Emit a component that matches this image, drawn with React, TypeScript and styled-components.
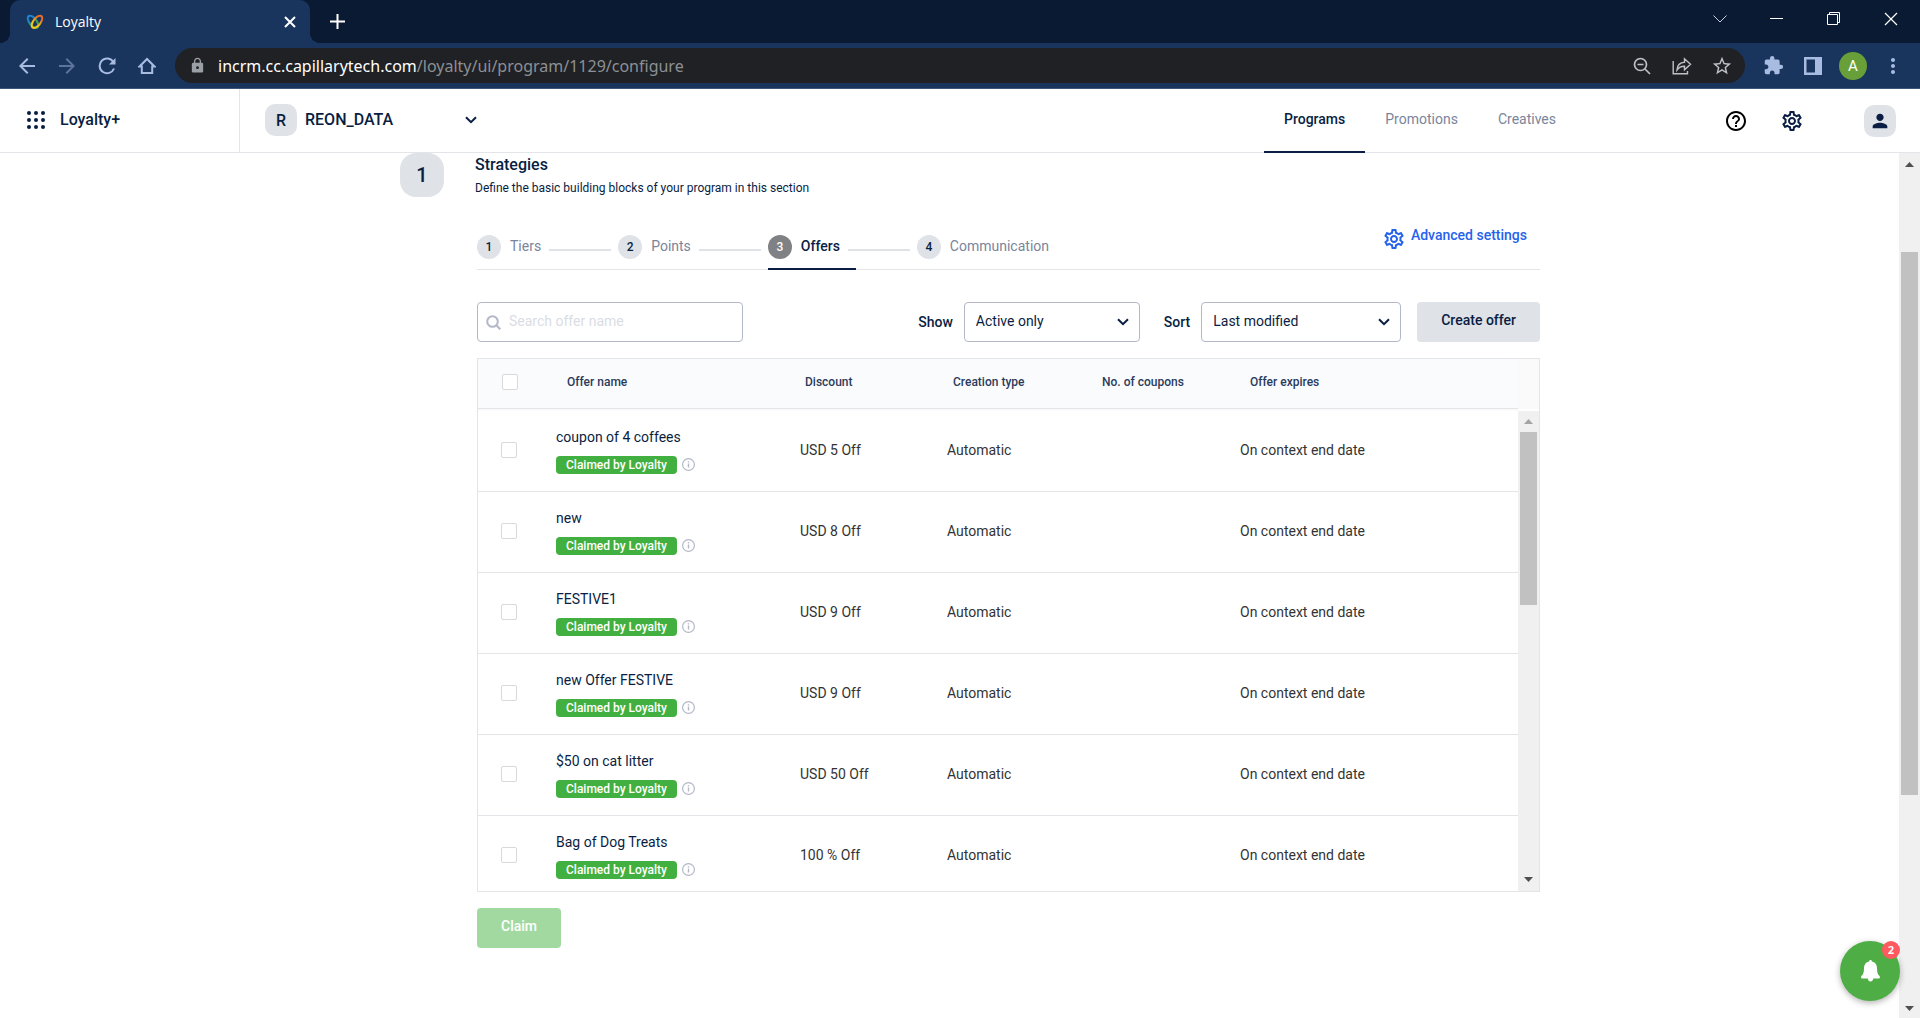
import React from "react";
import styled, { createGlobalStyle } from "styled-components";
import {
  MdArrowBack,
  MdArrowForward,
  MdExtension,
  MdHelpOutline,
  MdLock,
  MdMoreVert,
  MdOutlineSettings,
  MdPerson,
  MdStarBorder,
} from "react-icons/md";

const navy = "#091e42";
const grey = "#dfe2e7";
const line = "#e4e5e8";
const muted = "#7a859b";

const GlobalStyle = createGlobalStyle`
  *, *::before, *::after { box-sizing: border-box; }
  body { margin: 0; overflow: hidden; background: #fff; }
  body, button, input, select { font-family: Roboto, "Liberation Sans", sans-serif; }
  button { border: 0; padding: 0; background: none; color: inherit; }
  h1, p { margin: 0; }
  svg { display: block; flex: none; }
`;

const Page = styled.div`
  display: flex;
  flex-direction: column;
  height: 100vh;
  color: ${navy};
  font-size: 14px;
  line-height: 20px;
`;

/* ---------- browser frame ---------- */

const TabStrip = styled.div`
  display: flex;
  flex: none;
  height: 43px;
  padding: 0 1px 0 10px;
  background: #0a1a33;
  color: #fff;
`;

const BrowserTab = styled.div`
  position: relative;
  display: flex;
  align-items: center;
  width: 300px;
  padding: 0 12px 0 16px;
  border-radius: 10px 10px 0 0;
  background: #1a355d;
  font: 14px/20px "Open Sans", sans-serif;

  &::before,
  &::after {
    content: "";
    position: absolute;
    bottom: 0;
    width: 10px;
    height: 10px;
  }
  &::before {
    right: 100%;
    background: radial-gradient(circle at 0 0, #0a1a33 10px, #1a355d 10px);
  }
  &::after {
    left: 100%;
    background: radial-gradient(circle at 100% 0, #0a1a33 10px, #1a355d 10px);
  }
`;

const TabTitle = styled.span`
  flex: 1;
  margin-left: 11px;
`;

const IconButton = styled.button<{ $w?: number; $color?: string; $end?: boolean }>`
  display: flex;
  flex: none;
  align-items: center;
  justify-content: ${(p) => (p.$end ? "flex-end" : "center")};
  width: ${(p) => p.$w ?? 40}px;
  color: ${(p) => p.$color ?? "#a8bce2"};
`;

const WindowControls = styled.div`
  display: flex;
  height: 37px;
  margin-left: auto;
`;

const Toolbar = styled.div`
  display: flex;
  flex: none;
  height: 46px;
  padding: 5px 7px;
  border-bottom: 1px solid #3d5578;
  background: #1a355d;
`;

const AddressBar = styled.div`
  display: flex;
  flex: 1;
  align-items: center;
  margin: 0 8px;
  padding: 0 3px 0 14px;
  border-radius: 18px;
  background: #202124;
  color: #9aa0a6;
`;

const Url = styled.span`
  flex: 1;
  margin-left: 12px;
  color: #8d9094;
  font: 16px/24px "Noto Sans", sans-serif;

  b {
    color: #fff;
    font-weight: 400;
  }
`;

const Avatar = styled.span`
  display: flex;
  align-items: center;
  justify-content: center;
  width: 28px;
  height: 28px;
  border-radius: 50%;
  background: #689f38;
  color: #fff;
  font-size: 15px;
`;

/* ---------- application header ---------- */

const Header = styled.header`
  display: flex;
  flex: none;
  height: 64px;
  border-bottom: 1px solid ${line};
  font-weight: 500;
`;

const Brand = styled.div`
  display: flex;
  align-items: center;
  gap: 15px;
  width: 240px;
  padding: 0 0 1px 27px;
  border-right: 1px solid ${line};
  font-size: 16px;
`;

const OrgButton = styled.button`
  display: flex;
  align-items: center;
  width: 212px;
  margin-left: 25px;
  padding-bottom: 1px;
  font-size: 16px;
  font-weight: 500;
`;

const SoftBox = styled.span<{ $size: number }>`
  display: flex;
  flex: none;
  align-items: center;
  justify-content: center;
  width: ${(p) => p.$size}px;
  height: ${(p) => p.$size}px;
  border-radius: ${(p) => (p.$size > 40 ? 16 : 10)}px;
  background: ${grey};
  font-size: ${(p) => (p.$size > 40 ? 20 : 16)}px;
  font-weight: 500;
`;

const OrgName = styled.span`
  flex: 1;
  margin-left: 8px;
  padding-bottom: 2px;
  text-align: left;
`;

const Nav = styled.nav`
  display: flex;
  margin-left: auto;
`;

const NavLink = styled.a<{ $active?: boolean }>`
  height: 64px;
  padding: 20px 20px 0;
  border-bottom: ${(p) => (p.$active ? `2px solid ${navy}` : "0")};
  color: ${(p) => (p.$active ? navy : muted)};
  font-weight: ${(p) => (p.$active ? 500 : 400)};
  text-decoration: none;
`;

const HeaderTools = styled.div`
  display: flex;
  align-items: center;
  margin: 0 24px 0 132px;
`;

/* ---------- scrolling area ---------- */

const Body = styled.div`
  display: flex;
  flex: 1;
  min-height: 0;
`;

const Track = styled.div`
  display: flex;
  flex: 1;
  flex-direction: column;
  align-items: center;
  width: 21px;
  padding: 0 2px;
  background: #f0f0f0;
`;

const PageTrack = styled(Track)`
  flex: none;
`;

const TrackEnd = styled.div<{ $h: number; $bottom?: boolean }>`
  display: flex;
  flex: none;
  align-items: center;
  height: ${(p) => p.$h}px;
  margin-top: ${(p) => (p.$bottom ? "auto" : "0")};
`;

const Thumb = styled.div<{ $share: number }>`
  width: 100%;
  height: ${(p) => p.$share}%;
  background: #c1c1c1;
`;

const Main = styled.main`
  display: grid;
  flex: 1;
  grid-template-columns: 400fr minmax(0, 1140px) 359fr;
  overflow: hidden;
`;

const Section = styled.section`
  grid-column: 2;
`;

const SectionHead = styled.div`
  display: flex;
  gap: 31px;
`;

const Title = styled.h1`
  margin-top: 1px;
  font-size: 16px;
  font-weight: 500;
  line-height: 22px;
`;

const Subtitle = styled.p`
  margin-top: 2px;
  font-size: 12px;
`;

const Content = styled.div`
  margin-left: 77px;
`;

const StepBar = styled.div`
  display: flex;
  justify-content: space-between;
  margin-top: 29px;
  padding-right: 13px;
  border-bottom: 1px solid ${line};
`;

const Steps = styled.ol`
  display: flex;
  gap: 7px;
  margin: 0 0 -1px;
  padding: 8px 0 0;
  list-style: none;
`;

const Step = styled.li`
  display: flex;
  gap: 8px;
`;

const StepButton = styled.button<{ $active?: boolean }>`
  display: flex;
  align-items: flex-start;
  gap: 9px;
  height: 35px;
  margin-right: ${(p) => (p.$active ? "-16px" : "0")};
  padding-right: ${(p) => (p.$active ? "16px" : "0")};
  border-bottom: ${(p) => (p.$active ? `2px solid ${navy}` : "0")};
  color: ${(p) => (p.$active ? navy : muted)};
  font-size: 14px;
  font-weight: ${(p) => (p.$active ? 500 : 400)};
  line-height: 22px;
`;

const StepNumber = styled.span<{ $active?: boolean }>`
  width: 24px;
  height: 24px;
  border-radius: 50%;
  background: ${(p) => (p.$active ? "#808184" : grey)};
  color: ${(p) => (p.$active ? "#fff" : navy)};
  font-size: 12px;
  font-weight: 500;
  line-height: 24px;
`;

const Connector = styled.span`
  width: 62px;
  height: 2px;
  margin-top: 14px;
  background: ${grey};
`;

const AdvancedLink = styled.a`
  display: flex;
  gap: 5px;
  padding-bottom: 18px;
  color: #2563eb;
  font-weight: 500;
  line-height: 17px;
  text-decoration: none;
`;

const Filters = styled.div`
  display: flex;
  align-items: center;
  margin-top: 32px;
`;

const SearchBox = styled.label`
  display: flex;
  align-items: center;
  gap: 8px;
  width: 266px;
  height: 40px;
  margin-right: auto;
  padding: 0 8px;
  border: 1px solid #b3b7c8;
  border-radius: 4px;
`;

const SearchInput = styled.input`
  flex: 1;
  min-width: 0;
  padding: 0 0 2px;
  border: 0;
  outline: 0;
  color: ${navy};
  font-size: 14px;

  &::placeholder {
    color: #dadde4;
    opacity: 1;
  }
`;

const FilterLabel = styled.label`
  margin-right: 11px;
  font-weight: 500;
`;

const SelectBox = styled.span<{ $w: number; $after: number }>`
  display: grid;
  align-items: center;
  width: ${(p) => p.$w}px;
  height: 40px;
  margin-right: ${(p) => p.$after}px;

  > * {
    grid-area: 1 / 1;
  }
  > svg {
    justify-self: end;
    margin-right: 11px;
    pointer-events: none;
  }
`;

const Select = styled.select`
  width: 100%;
  height: 40px;
  padding: 0 32px 2px 11px;
  border: 1px solid #b3b7c8;
  border-radius: 4px;
  background: #fff;
  color: ${navy};
  font-size: 14px;
  appearance: none;
`;

const Button = styled.button<{ $primary?: boolean }>`
  height: 40px;
  padding: 0 24px 4px;
  border-radius: 4px;
  background: ${(p) => (p.$primary ? "#a2d9a1" : grey)};
  color: ${(p) => (p.$primary ? "#fff" : navy)};
  font-size: 14px;
  font-weight: 500;
`;

/* ---------- offers table ---------- */

const TableFrame = styled.div`
  display: flex;
  max-height: 534px;
  margin: 16px 0;
  border: 1px solid ${line};
`;

const TableClip = styled.div`
  flex: 1;
  overflow: hidden;
`;

const Table = styled.table`
  width: 100%;
  border-spacing: 0;
  table-layout: fixed;
  text-align: left;
`;

const Th = styled.th<{ $inset: number }>`
  height: 52px;
  padding: 0 0 6px ${(p) => p.$inset}px;
  background: #fafbfd;
  box-shadow: inset 0 -2px 0 #fafafb, inset 0 -3px 0 ${line};
  color: #2b3c5c;
  font-size: 12px;
  font-weight: 500;
`;

const Td = styled.td<{ $inset?: number }>`
  height: 81px;
  padding: 0 0 2px ${(p) => p.$inset ?? 16}px;
  border-bottom: 1px solid ${line};
  color: #333;
`;

const Checkbox = styled.input`
  display: block;
  width: 16px;
  height: 16px;
  margin: 0;
  border: 1px solid #d9d9d9;
  border-radius: 2px;
  background: #fff;
  appearance: none;
`;

const OfferName = styled.div`
  margin-bottom: 9px;
  color: ${navy};
`;

const TagRow = styled.div`
  display: flex;
  align-items: center;
  gap: 5px;
`;

const Tag = styled.span`
  padding: 0 10px;
  border-radius: 4px;
  background: #42b040;
  color: #fff;
  font-size: 12px;
  font-weight: 500;
  line-height: 18px;
`;

const TableSide = styled.div`
  display: flex;
  flex: none;
  flex-direction: column;
  width: 21px;
`;

const SideHead = styled.div`
  height: 50px;
  margin-bottom: 2px;
  background: #fafafa;
`;

const BellButton = styled.button`
  position: fixed;
  right: 20px;
  bottom: 17px;
  display: flex;
  align-items: center;
  justify-content: center;
  width: 60px;
  height: 60px;
  border-radius: 50%;
  background: #4fad46;
  box-shadow: 0 2px 6px rgba(0, 0, 0, 0.3);
`;

const Badge = styled.span`
  position: absolute;
  top: 0;
  right: 0;
  width: 18px;
  height: 18px;
  border-radius: 50%;
  background: #ff5a5f;
  color: #fff;
  font: 700 11px/18px "Open Sans", sans-serif;
  text-align: center;
`;

/* ---------- drawings ---------- */

const Logo = () => (
  <svg width="18" height="16" viewBox="0 0 18 16" fill="none" strokeWidth="2">
    <defs>
      <linearGradient id="logo-cool" x1="0" y1="0" x2="0" y2="1">
        <stop offset="0.2" stopColor="#1c86d1" />
        <stop offset="0.7" stopColor="#3fa648" />
      </linearGradient>
      <linearGradient id="logo-warm" x1="0" y1="0" x2="0" y2="1">
        <stop offset="0.2" stopColor="#ec6a28" />
        <stop offset="0.7" stopColor="#f5c51c" />
      </linearGradient>
    </defs>
    <ellipse cx="7" cy="7.800" rx="3.600" ry="7.200" transform="rotate(-38 7 7.800)" stroke="url(#logo-cool)" />
    <ellipse cx="11" cy="7.800" rx="3.600" ry="7.200" transform="rotate(38 11 7.800)" stroke="url(#logo-warm)" />
  </svg>
);

const Cross = ({ size, width }: { size: number; width: number }) => (
  <svg width={size} height={size} viewBox={`0 0 ${size} ${size}`} stroke="#fff" strokeWidth={width}>
    <path d={`M1 1L${size - 1} ${size - 1}M${size - 1} 1L1 ${size - 1}`} />
  </svg>
);

const Chevron = () => (
  <svg width="12" height="8" viewBox="0 0 12 8" fill="none" stroke={navy} strokeWidth="2">
    <path d="M1 1.200l5 5 5-5" />
  </svg>
);

const Arrow = ({ up, color = "#505050" }: { up?: boolean; color?: string }) => (
  <svg width="9" height="5" viewBox="0 0 9 5" fill={color}>
    <path d={up ? "M0 5L4.500 0 9 5z" : "M0 0L4.500 5 9 0z"} />
  </svg>
);

const InfoIcon = () => (
  <svg width="13" height="13" viewBox="0 0 13 13" fill="none" stroke="#b3b7c8">
    <circle cx="6.500" cy="6.500" r="5.900" strokeWidth="1.200" />
    <path d="M6.500 5.600v4M6.500 3.300v1.300" strokeWidth="1.400" />
  </svg>
);

const AppsIcon = () => (
  <svg width="18" height="18" viewBox="0 0 18 18" fill={navy}>
    {[2, 9, 16].map((y) => [2, 9, 16].map((x) => <circle key={`${x}-${y}`} cx={x} cy={y} r="2" />))}
  </svg>
);

/* ---------- data ---------- */

const steps = ["Tiers", "Points", "Offers", "Communication"];

const columns = [
  { title: "Offer name", inset: 27 },
  { title: "Discount", inset: 21 },
  { title: "Creation type", inset: 22 },
  { title: "No. of coupons", inset: 24 },
  { title: "Offer expires", inset: 26 },
];

const offers = [
  ["coupon of 4 coffees", "USD 5 Off"],
  ["new", "USD 8 Off"],
  ["FESTIVE1", "USD 9 Off"],
  ["new Offer FESTIVE", "USD 9 Off"],
  ["$50 on cat litter", "USD 50 Off"],
  ["Bag of Dog Treats", "100 % Off"],
];

function BrowserFrame() {
  return (
    <>
      <TabStrip>
        <BrowserTab>
          <Logo />
          <TabTitle>Loyalty</TabTitle>
          <IconButton $w={16} aria-label="Close tab">
            <Cross size={12} width={2} />
          </IconButton>
        </BrowserTab>
        <IconButton $w={55} aria-label="New tab">
          <svg width="15" height="15" viewBox="0 0 15 15" stroke="#fff" strokeWidth="2">
            <path d="M7.500 0v15M0 7.500h15" />
          </svg>
        </IconButton>
        <WindowControls>
          <IconButton $w={57} aria-label="Search tabs">
            <svg width="14" height="8" viewBox="0 0 14 8" fill="none" stroke="#c9ced6">
              <path d="M.5.5l6.500 6.500L13.500.5" />
            </svg>
          </IconButton>
          <IconButton $w={57} aria-label="Minimize">
            <svg width="13" height="1" viewBox="0 0 13 1" fill="#fff">
              <rect width="13" height="1" />
            </svg>
          </IconButton>
          <IconButton $w={57} aria-label="Restore">
            <svg width="13" height="13" viewBox="0 0 13 13" fill="none" stroke="#fff">
              <path d="M.5 2.500h10v10H.5zM2.500 2.500v-2h10v10h-2" />
            </svg>
          </IconButton>
          <IconButton $w={57} aria-label="Close window">
            <Cross size={14} width={1.2} />
          </IconButton>
        </WindowControls>
      </TabStrip>
      <Toolbar>
        <IconButton aria-label="Back">
          <MdArrowBack size={24} />
        </IconButton>
        <IconButton aria-label="Forward" $color="#5c739b">
          <MdArrowForward size={24} />
        </IconButton>
        <IconButton aria-label="Reload">
          <svg width="18" height="18" viewBox="0 0 18 18" fill="none" stroke="currentColor" strokeWidth="2">
            <path d="M15.400 5A7.400 7.400 0 1 0 16 11.500" />
            <path d="M17.500 1v6.500H11z" fill="currentColor" stroke="none" />
          </svg>
        </IconButton>
        <IconButton aria-label="Home">
          <svg width="18" height="18" viewBox="0 0 18 18" fill="none" stroke="currentColor" strokeWidth="2">
            <path d="M1.500 9.500L9 2l7.500 7.500h-2.300V16H3.800V9.500z" />
          </svg>
        </IconButton>
        <AddressBar>
          <MdLock size={17} />
          <Url>
            <b>incrm.cc.capillarytech.com</b>/loyalty/ui/program/1129/configure
          </Url>
          <IconButton aria-label="Zoom" $color="#bdc1c6">
            <svg width="18" height="18" viewBox="0 0 18 18" fill="none" stroke="currentColor" strokeWidth="1.700">
              <circle cx="7.500" cy="7.500" r="6" />
              <path d="M12 12l5 5M4.500 7.500h6" />
            </svg>
          </IconButton>
          <IconButton aria-label="Share" $color="#bdc1c6">
            <svg width="20" height="18" viewBox="0 0 20 18" fill="none" stroke="currentColor" strokeWidth="1.400">
              <path d="M1.200 4v12.800H15.500V14" />
              <path d="M5 13c.3-4.500 2.500-7.500 7.500-7.700V1.800l6 5.500-6 5.500V9.300C9 9.200 6.800 10.400 5 13z" />
            </svg>
          </IconButton>
          <IconButton aria-label="Bookmark" $color="#bdc1c6">
            <MdStarBorder size={22} />
          </IconButton>
        </AddressBar>
        <IconButton aria-label="Extensions">
          <MdExtension size={21} />
        </IconButton>
        <IconButton aria-label="Side panel">
          <svg width="18" height="18" viewBox="0 0 18 18" fill="currentColor" fillRule="evenodd">
            <path d="M0 0h18v18H0zM2.500 2.500v13h8.500v-13z" />
          </svg>
        </IconButton>
        <IconButton aria-label="Profile">
          <Avatar>A</Avatar>
        </IconButton>
        <IconButton aria-label="Menu">
          <MdMoreVert size={24} />
        </IconButton>
      </Toolbar>
    </>
  );
}

function OffersTable() {
  return (
    <TableFrame>
      <TableClip>
        <Table>
          <colgroup>
            <col width={62} />
            <col width={244} />
            <col width={147} />
            <col width={147} />
            <col width={146} />
            <col />
          </colgroup>
          <thead>
            <tr>
              <Th $inset={24}>
                <Checkbox type="checkbox" aria-label="Select all offers" />
              </Th>
              {columns.map((c) => (
                <Th key={c.title} $inset={c.inset}>
                  {c.title}
                </Th>
              ))}
            </tr>
          </thead>
          <tbody>
            {offers.map(([name, discount]) => (
              <tr key={name}>
                <Td $inset={23}>
                  <Checkbox type="checkbox" aria-label={`Select ${name}`} />
                </Td>
                <Td>
                  <OfferName>{name}</OfferName>
                  <TagRow>
                    <Tag>Claimed by Loyalty</Tag>
                    <InfoIcon />
                  </TagRow>
                </Td>
                <Td>{discount}</Td>
                <Td>Automatic</Td>
                <Td />
                <Td>On context end date</Td>
              </tr>
            ))}
          </tbody>
        </Table>
      </TableClip>
      <TableSide>
        <SideHead />
        <Track>
          <TrackEnd $h={21}>
            <Arrow up color="#a3a3a3" />
          </TrackEnd>
          <Thumb $share={36} />
          <TrackEnd $h={23} $bottom>
            <Arrow />
          </TrackEnd>
        </Track>
      </TableSide>
    </TableFrame>
  );
}

export default function App() {
  return (
    <Page>
      <GlobalStyle />
      <BrowserFrame />
      <Header>
        <Brand>
          <AppsIcon />
          Loyalty+
        </Brand>
        <OrgButton>
          <SoftBox $size={32}>R</SoftBox>
          <OrgName>REON_DATA</OrgName>
          <Chevron />
        </OrgButton>
        <Nav>
          <NavLink href="#programs" $active>
            Programs
          </NavLink>
          <NavLink href="#promotions">Promotions</NavLink>
          <NavLink href="#creatives">Creatives</NavLink>
        </Nav>
        <HeaderTools>
          <IconButton $w={56} $color="#000" aria-label="Help">
            <MdHelpOutline size={24} />
          </IconButton>
          <IconButton $w={56} $color={navy} aria-label="Settings">
            <MdOutlineSettings size={24} />
          </IconButton>
          <IconButton $w={76} $color={navy} $end aria-label="Account">
            <SoftBox $size={32}>
              <MdPerson size={22} />
            </SoftBox>
          </IconButton>
        </HeaderTools>
      </Header>
      <Body>
        <Main>
          <Section>
            <SectionHead>
              <SoftBox $size={44}>1</SoftBox>
              <div>
                <Title>Strategies</Title>
                <Subtitle>Define the basic building blocks of your program in this section</Subtitle>
              </div>
            </SectionHead>
            <Content>
              <StepBar>
                <Steps>
                  {steps.map((label, i) => (
                    <Step key={label}>
                      <StepButton $active={i === 2}>
                        <StepNumber $active={i === 2}>{i + 1}</StepNumber>
                        {label}
                      </StepButton>
                      {i < steps.length - 1 && <Connector />}
                    </Step>
                  ))}
                </Steps>
                <AdvancedLink href="#advanced">
                  <MdOutlineSettings size={24} />
                  Advanced settings
                </AdvancedLink>
              </StepBar>
              <Filters>
                <SearchBox>
                  <svg width="15" height="15" viewBox="0 0 15 15" fill="none" stroke="#b3b7c8" strokeWidth="2">
                    <circle cx="6.500" cy="6.500" r="5.300" />
                    <path d="M10.300 10.300l4 4" />
                  </svg>
                  <SearchInput placeholder="Search offer name" aria-label="Search offer name" />
                </SearchBox>
                <FilterLabel htmlFor="show">Show</FilterLabel>
                <SelectBox $w={176} $after={24}>
                  <Select id="show">
                    <option>Active only</option>
                  </Select>
                  <Chevron />
                </SelectBox>
                <FilterLabel htmlFor="sort">Sort</FilterLabel>
                <SelectBox $w={200} $after={16}>
                  <Select id="sort">
                    <option>Last modified</option>
                  </Select>
                  <Chevron />
                </SelectBox>
                <Button>Create offer</Button>
              </Filters>
              <OffersTable />
              <Button $primary>Claim</Button>
            </Content>
          </Section>
        </Main>
        <PageTrack>
          <TrackEnd $h={22}>
            <Arrow up />
          </TrackEnd>
          <TrackEnd $h={77} />
          <Thumb $share={62.8} />
          <TrackEnd $h={19} $bottom>
            <Arrow />
          </TrackEnd>
        </PageTrack>
      </Body>
      <BellButton aria-label="Notifications">
        <svg width="19" height="22" viewBox="0 0 19 22" fill="#fff">
          <path d="M9.500 0c.9 0 1.400.6 1.400 1.500C14.300 2.200 16 4.700 16 8c0 4.500.8 6.300 2.500 8 .8 1 .4 2.500-1 2.500h-5.300C12 20.500 11 21.500 9.500 21.500S7 20.500 6.800 18.500H1.500c-1.400 0-1.800-1.500-1-2.500C2.200 14.300 3 12.500 3 8c0-3.300 1.700-5.800 5.100-6.500C8.100.6 8.600 0 9.500 0z" />
        </svg>
        <Badge>2</Badge>
      </BellButton>
    </Page>
  );
}
